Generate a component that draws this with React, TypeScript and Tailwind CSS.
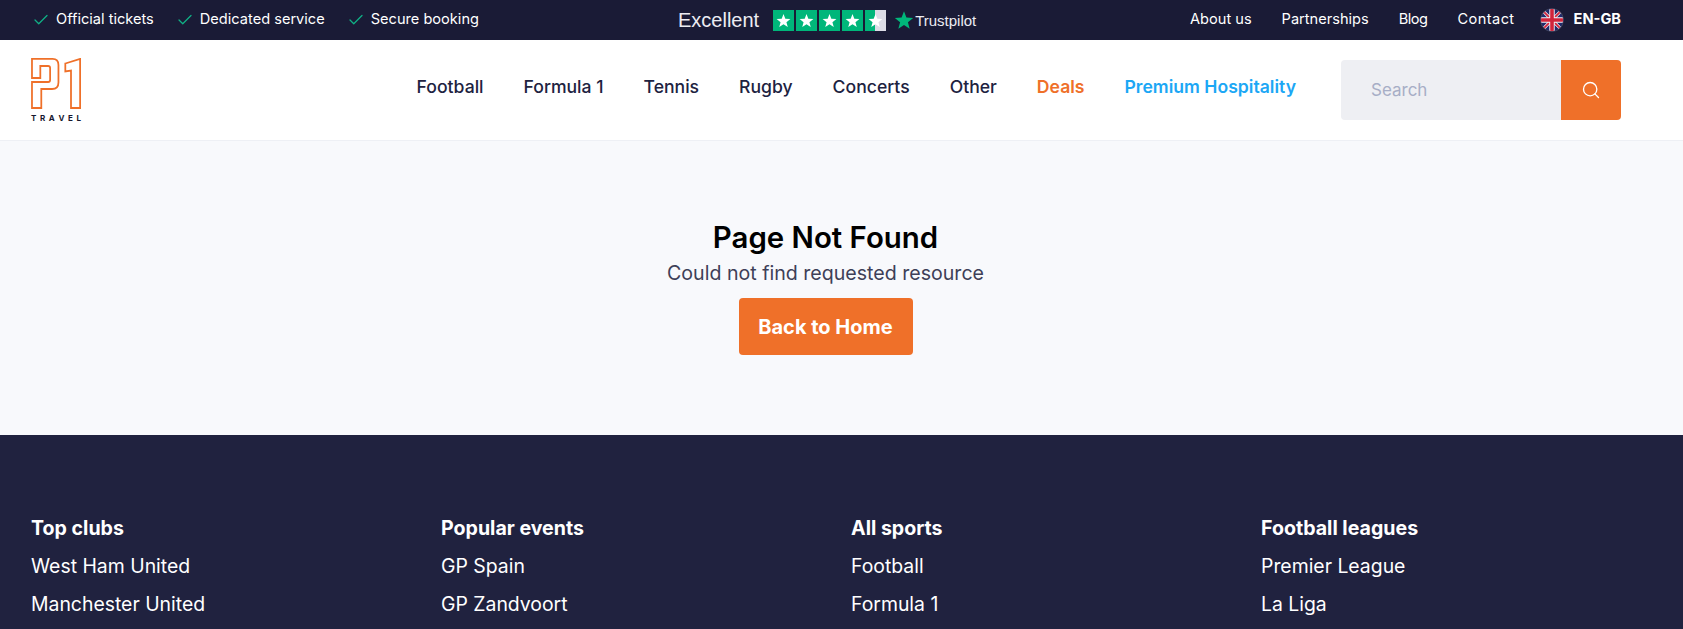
import { Check, Search } from "lucide-react";

const navItems = ["Football", "Formula 1", "Tennis", "Rugby", "Concerts", "Other"];
const footer = [
  ["Top clubs", "West Ham United", "Manchester United"],
  ["Popular events", "GP Spain", "GP Zandvoort"],
  ["All sports", "Football", "Formula 1"],
  ["Football leagues", "Premier League", "La Liga"],
];

function Star({ className }: { className?: string }) {
  return (
    <svg viewBox="0 0 24 24" className={className} fill="currentColor">
      <path d="M12 1.5l2.9 7.6 8.1.4-6.3 5.1 2.1 7.9L12 18.1l-6.8 4.4 2.1-7.9L1 9.5l8.1-.4z" />
    </svg>
  );
}

function Stars() {
  return (
    <div className="flex gap-[2px]">
      {[0, 1, 2, 3].map((i) => (
        <div key={i} className="flex h-[21px] w-[21px] items-center justify-center bg-[#00b67a] text-white">
          <Star className="h-[15px] w-[15px]" />
        </div>
      ))}
      <div className="flex h-[21px] w-[21px] items-center justify-center bg-[linear-gradient(90deg,#00b67a_50%,#dcdce6_50%)] text-white">
        <Star className="h-[15px] w-[15px]" />
      </div>
    </div>
  );
}

function Flag() {
  return (
    <svg viewBox="0 0 24 24" className="h-6 w-6 rounded-full">
      <defs>
        <clipPath id="c"><circle cx="12" cy="12" r="11" /></clipPath>
      </defs>
      <circle cx="12" cy="12" r="12" fill="#3f415c" />
      <g clipPath="url(#c)">
        <rect width="24" height="24" fill="#1f2a6b" />
        <path d="M0 0L24 24M24 0L0 24" stroke="#f4f4f8" strokeWidth="3.2" />
        <path d="M0 0L24 24M24 0L0 24" stroke="#d0243b" strokeWidth="1.8" />
        <path d="M12 0V24M0 12H24" stroke="#f4f4f8" strokeWidth="5.4" />
        <path d="M12 0V24M0 12H24" stroke="#d0243b" strokeWidth="3.6" />
      </g>
    </svg>
  );
}

function Logo() {
  return (
    <div className="flex w-[50px] flex-col">
      <svg viewBox="0 0 51 51" className="h-[51px] w-[50px]" fill="none" stroke="#ef7029" strokeWidth="1.8" preserveAspectRatio="none">
        <path d="M1 .9H22Q28 .9 28 7V24.5Q28 31 21.5 31H10.5V50H1V24H17.5Q19.5 24 19.5 22V10Q19.5 8 17.5 8H9.5V20H1Z" />
        <path d="M35 5.5L50.1.9V50H40.8V12.5L35 13.5Z" />
      </svg>
      <div className="mt-[5px] flex justify-between text-[8px] leading-[8px] font-bold text-[#16172e]">
        {"TRAVEL".split("").map((c, i) => <span key={i}>{c}</span>)}
      </div>
    </div>
  );
}

export default function App() {
  return (
    <div className="h-[629px] overflow-hidden bg-white font-['Inter','Liberation_Sans',sans-serif]">
      <div className="flex h-10 items-center bg-[#1a1b36] pl-[32px] pr-[62px] text-[14.6px] text-white">
        <div className="flex w-[646px] items-center gap-[22px]">
          {["Official tickets", "Dedicated service", "Secure booking"].map((t) => (
            <div key={t} className="flex items-center gap-[6px]">
              <Check className="h-[18px] w-[18px] text-[#10b085]" strokeWidth={1.7} />
              <span>{t}</span>
            </div>
          ))}
        </div>
        <div className="flex items-center font-['Liberation_Sans',sans-serif]">
          <span className="mr-[14px] text-[20px] text-[#ececf2]">Excellent</span>
          <Stars />
          <Star className="ml-[8px] h-[20px] w-[20px] text-[#00b67a]" />
          <span className="ml-[1px] mt-[3px] text-[15px] text-[#ececf2]">Trustpilot</span>
        </div>
        <div className="ml-auto flex items-center gap-[30px]">
          <span>About us</span>
          <span>Partnerships</span>
          <span className="tracking-[-0.5px]">Blog</span>
          <span className="tracking-[0.4px]">Contact</span>
          <div className="-ml-[5px] flex items-center gap-[10px]">
            <Flag />
            <span className="font-bold">EN-GB</span>
          </div>
        </div>
      </div>

      <header className="flex h-[101px] items-center border-b border-[#eef0f5] pl-[31px] pr-[62px]">
        <Logo />
        <nav className="ml-auto flex items-center gap-10 pb-[6px] text-[17.6px] font-medium text-[#20223f]">
          {navItems.map((n) => <span key={n}>{n}</span>)}
          <span className="font-semibold text-[#ef7029]">Deals</span>
          <span className="font-semibold text-[#1ca7f5]">Premium Hospitality</span>
        </nav>
        <div className="ml-[45px] flex h-[60px] w-[280px] overflow-hidden rounded-[4px]">
          <div className="flex flex-1 items-center bg-[#eeeff3] pl-[30px] pt-px text-[17px] text-[#a7aec6]">Search</div>
          <div className="flex w-[60px] items-center justify-center bg-[#ef7029] text-white">
            <Search className="h-[20px] w-[20px]" strokeWidth={1.6} />
          </div>
        </div>
      </header>

      <main className="flex h-[294px] flex-col items-center bg-[#f8f9fc] pr-[32px] pt-[78px]">
        <h1 className="text-[29.4px] leading-[38px] font-semibold text-black">Page Not Found</h1>
        <p className="mt-[1px] text-[19.6px] leading-[30px] text-[#3e3f58]">Could not find requested resource</p>
        <button className="mt-[10px] h-[57px] w-[174px] rounded-[4px] bg-[#ef7029] text-[20px] font-bold text-white">
          Back to Home
        </button>
      </main>

      <footer className="bg-[#20223f] pl-[31px] pr-[63px] pt-[78px] pb-10 text-white">
        <div className="grid grid-cols-4 gap-x-[51px]">
          {footer.map(([head, ...rows]) => (
            <div key={head} className="flex flex-col">
              <div className="h-[38px] text-[19.6px] leading-[30px] font-bold">{head}</div>
              {rows.map((r) => (
                <div key={r} className="h-[37.5px] text-[19.4px] leading-[30px]">{r}</div>
              ))}
            </div>
          ))}
        </div>
      </footer>
    </div>
  );
}
